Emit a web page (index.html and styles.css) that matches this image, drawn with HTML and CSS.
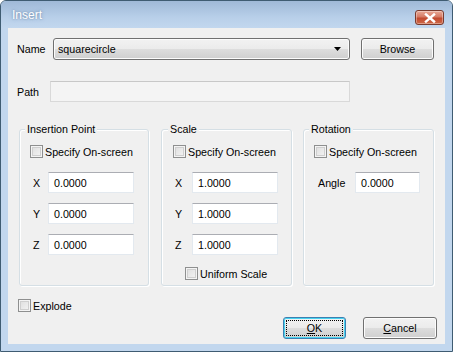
FILE: index.html
```html
<!DOCTYPE html>
<html>
<head>
<meta charset="utf-8">
<link rel="stylesheet" href="styles.css">
</head>
<body>
<div class="window">
  <div class="titlebar">
    <span class="title">Insert</span>
    <span class="close">
      <svg width="12" height="10" viewBox="0 0 12 10"><path d="M2 1.5 L10 8.5 M10 1.5 L2 8.5" stroke="#fff" stroke-width="2.4" stroke-linecap="square" fill="none"/></svg>
    </span>
  </div>
  <div class="client">
    <div class="row name-row">
      <span class="lbl name-lbl">Name</span>
      <div class="combo">
        <span class="combo-text">squarecircle</span>
        <svg class="arrow" width="7" height="4" viewBox="0 0 7 4"><path d="M0 0 H7 L3.5 4 Z" fill="#000"/></svg>
      </div>
      <span class="btn browse">Browse</span>
    </div>
    <div class="row path-row">
      <span class="lbl path-lbl">Path</span>
      <div class="input path-input"></div>
    </div>
    <div class="groups">
      <div class="group g-ins">
        <span class="legend">Insertion Point</span>
        <div class="check-row"><span class="cb"></span><span>Specify On-screen</span></div>
        <div class="field first"><span class="flabel">X</span><div class="input num">0.0000</div></div>
        <div class="field"><span class="flabel">Y</span><div class="input num">0.0000</div></div>
        <div class="field"><span class="flabel">Z</span><div class="input num">0.0000</div></div>
      </div>
      <div class="group g-scale">
        <span class="legend">Scale</span>
        <div class="check-row"><span class="cb"></span><span>Specify On-screen</span></div>
        <div class="field first"><span class="flabel">X</span><div class="input num">1.0000</div></div>
        <div class="field"><span class="flabel">Y</span><div class="input num">1.0000</div></div>
        <div class="field"><span class="flabel">Z</span><div class="input num">1.0000</div></div>
        <div class="check-row uniform"><span class="cb"></span><span>Uniform Scale</span></div>
      </div>
      <div class="group g-rot">
        <span class="legend">Rotation</span>
        <div class="check-row"><span class="cb"></span><span>Specify On-screen</span></div>
        <div class="field first"><span class="flabel angle">Angle</span><div class="input num angle-input">0.0000</div></div>
      </div>
    </div>
    <div class="check-row explode"><span class="cb"></span><span>Explode</span></div>
    <div class="buttons">
      <span class="btn ok default"><span class="focus"><u>O</u>K</span></span>
      <span class="btn cancel"><u>C</u>ancel</span>
    </div>
  </div>
</div>
</body>
</html>
```

FILE: styles.css
```css
* { box-sizing: border-box; }
html, body { margin: 0; padding: 0; }
body {
  width: 453px;
  height: 352px;
  overflow: hidden;
  font-family: "Liberation Sans", Arial, sans-serif;
  font-size: 10.7px;
  color: #000;
}
.window {
  width: 453px;
  height: 352px;
  border: 1px solid #3f5c72;
  border-radius: 6px 6px 0 0;
  background: #c2d7ee;
  padding: 0 7px 7px 7px;
  display: flex;
  flex-direction: column;
}
.titlebar {
  height: 27px;
  margin: 0 -7px;
  padding: 0 8px 0 11px;
  background: linear-gradient(#9fb9d7, #b8cfe9 60%, #c2d7ee);
  border-radius: 5px 5px 0 0;
  display: flex;
  align-items: flex-start;
  justify-content: space-between;
}
.title {
  margin-top: 7px;
  font-size: 12px;
  color: #ffffff;
  text-shadow: 0 0 2px #6f8cae, 0 0 4px #8aa6c6;
}
.close {
  margin-top: 9px;
  width: 29px;
  height: 15px;
  border: 1px solid #7a3b2e;
  border-radius: 3px;
  background: linear-gradient(#e9a997, #d57a64 45%, #c24a30 55%, #cf6a48);
  box-shadow: inset 0 0 0 1px rgba(255,255,255,0.35);
  display: flex;
  align-items: center;
  justify-content: center;
}
.client {
  flex: 1;
  background: #f0f0f0;
  padding-left: 9px;
  padding-right: 8px;
}
.row {
  display: flex;
  align-items: center;
}
.name-row { margin-top: 10px; height: 22px; }
.name-lbl { width: 36px; }
.combo {
  width: 297px;
  height: 22px;
  border: 1px solid #707070;
  border-radius: 3px;
  background: linear-gradient(#f2f2f2, #ebebeb 50%, #dddddd 51%, #cfcfcf);
  box-shadow: inset 0 0 0 1px #fcfcfc;
  display: flex;
  align-items: center;
  justify-content: space-between;
  padding: 0 8px 0 4px;
}
.btn {
  display: flex;
  align-items: center;
  justify-content: center;
  height: 22px;
  border: 1px solid #707070;
  border-radius: 3px;
  background: linear-gradient(#f2f2f2, #ebebeb 50%, #dddddd 51%, #cfcfcf);
  box-shadow: inset 0 0 0 1px #fcfcfc;
}
.browse { width: 73px; margin-left: 11px; }
.path-row { margin-top: 21px; height: 21px; }
.path-lbl { width: 33px; }
.input {
  height: 21px;
  border: 1px solid #e3e9ef;
  border-top-color: #abadb3;
  background: #fff;
  display: flex;
  align-items: center;
  padding-left: 5px;
}
.path-input {
  width: 300px;
  background: #f4f4f4;
  border-color: #d9d9d9;
  border-top-color: #c8c8c8;
}
.groups {
  display: flex;
  margin-top: 27px;
  margin-left: 2px;
}
.group {
  height: 157px;
  border: 1px solid #d5dfe5;
  border-radius: 3px;
  box-shadow: inset 1px 1px 0 #fff, 1px 1px 0 #fff;
  display: flex;
  flex-direction: column;
  align-items: flex-start;
}
.g-ins { width: 130px; padding-left: 10px; }
.g-scale { width: 131px; margin-left: 12px; padding-left: 11px; }
.g-rot { width: 131px; margin-left: 11px; padding-left: 10px; }
.legend {
  height: 14px;
  line-height: 14px;
  margin-top: -8px;
  margin-left: -5px;
  padding: 0 2px;
  background: #f0f0f0;
  white-space: nowrap;
}
.check-row {
  display: flex;
  align-items: center;
  height: 13px;
  margin-top: 9px;
  white-space: nowrap;
}
.cb {
  width: 13px;
  height: 13px;
  border: 1px solid #8e8f8f;
  background: linear-gradient(135deg, #dcdcdc, #f6f6f6);
  box-shadow: inset 0 0 0 1px #f4f4f4, inset 0 0 0 2px #cfcfcf;
  margin-right: 2px;
  flex: none;
}
.field {
  display: flex;
  align-items: center;
  margin-top: 10px;
  height: 21px;
}
.field.first { margin-top: 14px; }
.flabel { width: 18px; padding-left: 3px; }
.g-scale .flabel { width: 19px; padding-left: 2px; }
.num { width: 86px; }
.flabel.angle { width: 41px; padding-left: 4px; }
.angle-input { width: 65px; }
.uniform { margin-top: 12px; margin-left: 12px; }
.explode { margin-top: 13px; margin-left: 1px; }
.buttons {
  display: flex;
  justify-content: flex-end;
  margin-top: 5px;
}
.ok { width: 63px; }
.cancel { width: 74px; margin-left: 17px; }
.default {
  border-color: #3c7fb1;
  box-shadow: inset 0 0 0 1px #48d3f0;
  padding: 2px;
}
.focus {
  width: 100%;
  height: 100%;
  border: 1px dotted #000;
  display: flex;
  align-items: center;
  justify-content: center;
}
u { text-decoration-thickness: 1px; text-underline-offset: 1px; }
```
